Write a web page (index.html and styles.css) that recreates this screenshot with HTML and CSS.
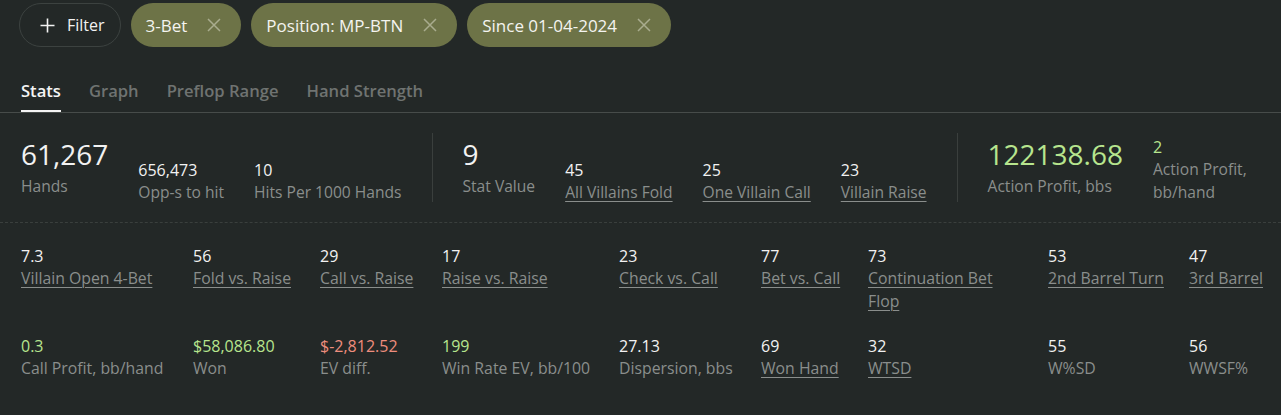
FILE: index.html
```html
<!DOCTYPE html>
<html lang="en">
<head>
<meta charset="utf-8">
<title>Stats</title>
<link rel="stylesheet" href="styles.css">
</head>
<body>
<div class="page">
  <div class="toolbar">
    <button class="filter-btn">
      <svg class="plus" width="15" height="15" viewBox="0 0 15 15"><path d="M7.5 0.5v14M0.5 7.5h14" stroke="#f2f2f2" stroke-width="1.6" fill="none"/></svg>
      <span>Filter</span>
    </button>
    <span class="chip"><span>3-Bet</span><svg class="x" width="14" height="14" viewBox="0 0 14 14"><path d="M1 1l12 12M13 1L1 13" stroke="currentColor" stroke-width="1.5" fill="none"/></svg></span>
    <span class="chip"><span>Position: MP-BTN</span><svg class="x" width="14" height="14" viewBox="0 0 14 14"><path d="M1 1l12 12M13 1L1 13" stroke="currentColor" stroke-width="1.5" fill="none"/></svg></span>
    <span class="chip"><span>Since 01-04-2024</span><svg class="x" width="14" height="14" viewBox="0 0 14 14"><path d="M1 1l12 12M13 1L1 13" stroke="currentColor" stroke-width="1.5" fill="none"/></svg></span>
  </div>

  <nav class="tabs">
    <a class="tab active">Stats</a>
    <a class="tab">Graph</a>
    <a class="tab">Preflop Range</a>
    <a class="tab">Hand Strength</a>
  </nav>

  <section class="summary">
    <div class="stat big"><div class="value">61,267</div><div class="label">Hands</div></div>
    <div class="stat"><div class="value">656,473</div><div class="label">Opp-s to hit</div></div>
    <div class="stat"><div class="value">10</div><div class="label">Hits Per 1000 Hands</div></div>
    <div class="divider"></div>
    <div class="stat big"><div class="value">9</div><div class="label">Stat Value</div></div>
    <div class="stat"><div class="value">45</div><div class="label link">All Villains Fold</div></div>
    <div class="stat"><div class="value">25</div><div class="label link">One Villain Call</div></div>
    <div class="stat"><div class="value">23</div><div class="label link">Villain Raise</div></div>
    <div class="divider"></div>
    <div class="stat big"><div class="value green">122138.68</div><div class="label">Action Profit, bbs</div></div>
    <div class="stat wrap"><div class="value green">2</div><div class="label">Action Profit, bb/hand</div></div>
  </section>

  <section class="grid">
    <div class="cell"><div class="value">7.3</div><div class="label link">Villain Open 4-Bet</div></div>
    <div class="cell"><div class="value">56</div><div class="label link">Fold vs. Raise</div></div>
    <div class="cell"><div class="value">29</div><div class="label link">Call vs. Raise</div></div>
    <div class="cell"><div class="value">17</div><div class="label link">Raise vs. Raise</div></div>
    <div class="cell"><div class="value">23</div><div class="label link">Check vs. Call</div></div>
    <div class="cell"><div class="value">77</div><div class="label link">Bet vs. Call</div></div>
    <div class="cell"><div class="value">73</div><div class="label link narrow">Continuation Bet Flop</div></div>
    <div class="cell"><div class="value">53</div><div class="label link">2nd Barrel Turn</div></div>
    <div class="cell"><div class="value">47</div><div class="label link">3rd Barrel</div></div>

    <div class="cell"><div class="value green">0.3</div><div class="label">Call Profit, bb/hand</div></div>
    <div class="cell"><div class="value green">$58,086.80</div><div class="label">Won</div></div>
    <div class="cell"><div class="value red">$-2,812.52</div><div class="label">EV diff.</div></div>
    <div class="cell"><div class="value green">199</div><div class="label">Win Rate EV, bb/100</div></div>
    <div class="cell"><div class="value">27.13</div><div class="label">Dispersion, bbs</div></div>
    <div class="cell"><div class="value">69</div><div class="label link">Won Hand</div></div>
    <div class="cell"><div class="value">32</div><div class="label link">WTSD</div></div>
    <div class="cell"><div class="value">55</div><div class="label">W%SD</div></div>
    <div class="cell"><div class="value">56</div><div class="label">WWSF%</div></div>
  </section>
</div>
</body>
</html>
```

FILE: styles.css
```css
* { box-sizing: border-box; }

html, body {
  margin: 0;
  padding: 0;
  background: #232827;
  height: 100%;
}

body {
  font-family: "Open Sans", "Noto Sans", sans-serif;
  color: #f0f0f0;
  overflow: hidden;
}

.page {
  width: 1281px;
}

/* Toolbar */
.toolbar {
  display: flex;
  align-items: center;
  gap: 10px;
  padding: 3px 0 0 19px;
  height: 47px;
}

.filter-btn {
  display: flex;
  align-items: center;
  gap: 12px;
  height: 44px;
  padding: 0 15px 0 20px;
  border: 1px solid #3c4240;
  border-radius: 22px;
  background: transparent;
  color: #f2f2f2;
  font-family: inherit;
  font-size: 16px;
}

.chip {
  display: flex;
  align-items: center;
  gap: 20px;
  height: 44px;
  padding: 0 20px 0 15px;
  border-radius: 22px;
  background: #6d7347;
  color: #f4f4f0;
  font-size: 17px;
}

.chip .x {
  color: #a9ac8e;
  flex: none;
}

/* Tabs */
.tabs {
  display: flex;
  gap: 28px;
  margin-top: 33px;
  padding-left: 21px;
  border-bottom: 1px solid #474c4a;
}

.tab {
  font-size: 16.6px;
  font-weight: 600;
  line-height: 22px;
  padding-bottom: 8px;
  border-bottom: 2px solid transparent;
  color: #6f7371;
}

.tab.active {
  color: #f4f4f4;
  border-bottom-color: #f4f4f4;
}

/* Summary row */
.summary {
  display: flex;
  align-items: flex-end;
  gap: 30px;
  height: 110px;
  padding: 20px 21px 19px;
  border-bottom: 1px dashed #3a3f3d;
}

.divider {
  align-self: stretch;
  width: 1px;
  background: #3a3f3d;
  margin-bottom: 1px;
}

.value {
  font-size: 16px;
  line-height: 22px;
  color: #f2f2f2;
}

.label {
  font-size: 15.8px;
  line-height: 22.5px;
  color: #8a8e8c;
}

.summary .label {
  font-size: 15.6px;
}

.label.link {
  text-decoration: underline;
  text-underline-offset: 3px;
  text-decoration-thickness: 1px;
}

.stat.big {
  padding-bottom: 6px;
}

.stat.big .value {
  font-size: 28px;
  line-height: 36px;
}

.stat.big .label {
  margin-top: 3px;
}

.stat.wrap {
  flex: 1;
  min-width: 0;
}

.green { color: #b7e58e; }
.red { color: #ee8d7d; }

/* Grid of stats */
.grid {
  display: grid;
  grid-template-columns: 172px 127px 122px 177px 142px 107px 180px 141px 1fr;
  row-gap: 23px;
  padding: 22px 21px 0;
}

.cell {
  min-width: 0;
}

.cell .label {
  white-space: nowrap;
}

.cell .label.narrow {
  white-space: normal;
  max-width: 135px;
}
```
